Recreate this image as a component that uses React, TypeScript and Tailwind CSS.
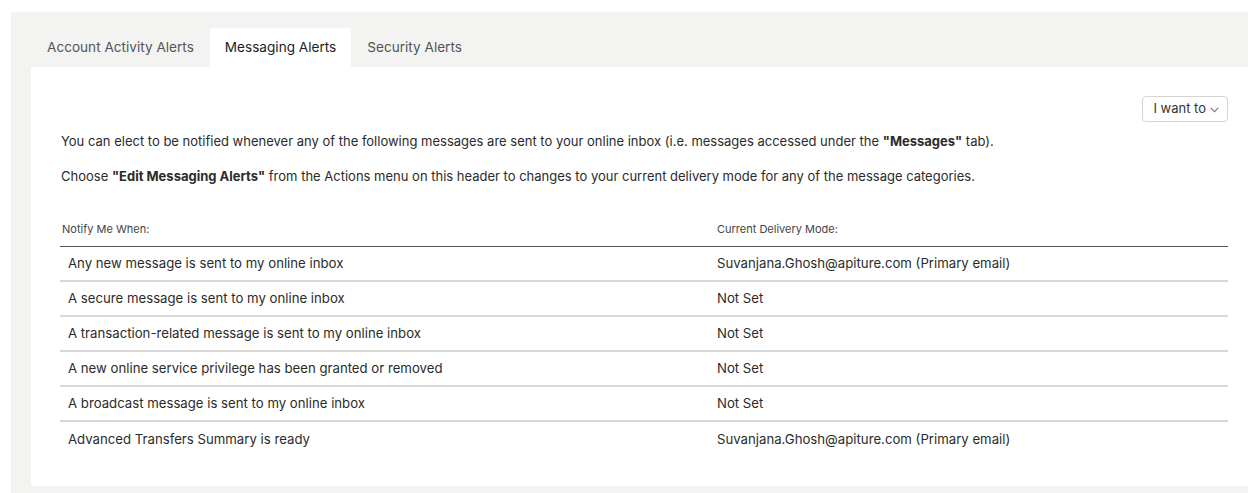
import React from "react";

const rows: [string, string][] = [
  ["Any new message is sent to my online inbox", "Suvanjana.Ghosh@apiture.com (Primary email)"],
  ["A secure message is sent to my online inbox", "Not Set"],
  ["A transaction-related message is sent to my online inbox", "Not Set"],
  ["A new online service privilege has been granted or removed", "Not Set"],
  ["A broadcast message is sent to my online inbox", "Not Set"],
  ["Advanced Transfers Summary is ready", "Suvanjana.Ghosh@apiture.com (Primary email)"],
];

const tabs = ["Account Activity Alerts", "Messaging Alerts", "Security Alerts"];

export default function App() {
  return (
    <div
      className="h-[493px] w-[1248px] overflow-hidden bg-white pt-3 pl-[11px] text-[#2b2b2b]"
      style={{ fontFamily: "Inter, 'Noto Sans', sans-serif" }}
    >
      <div className="flex h-full flex-col bg-[#f3f3f2] pt-4 pl-5 pb-[7px]">
        {/* tab strip */}
        <div className="flex h-[39px] items-stretch">
          {tabs.map((t, i) => (
            <div
              key={t}
              className={
                i === 1
                  ? "flex items-center rounded-t-[3px] bg-white px-[15px] text-[13.6px] text-[#222]"
                  : "flex items-center px-[16px] text-[13.6px] text-[#555]"
              }
            >
              {t}
            </div>
          ))}
        </div>

        {/* panel body */}
        <div className="flex-1 rounded-bl-[4px] bg-white pt-[29px] pl-[30px] pr-[20px]">
          <div className="flex justify-end">
            <button className="flex h-[26px] items-center gap-[2px] rounded-[4px] border border-[#d4d4d4] bg-white pl-[10px] pr-[6px] text-[13px] text-[#333]">
              I want to
              <svg width="13" height="13" viewBox="0 0 12 12" fill="none" stroke="#777" strokeWidth="1">
                <path d="M2.5 4.5 6 8l3.5-3.5" />
              </svg>
            </button>
          </div>

          <p className="mt-[9px] text-[13px] leading-5">
            You can elect to be notified whenever any of the following messages are sent to your online inbox (i.e.
            messages accessed under the <b className="font-bold">"Messages"</b> tab).
          </p>
          <p className="mt-[15px] text-[13px] leading-5">
            Choose <b className="font-bold">"Edit Messaging Alerts"</b> from the Actions menu on this header to changes
            to your current delivery mode for any of the message categories.
          </p>

          {/* alert categories */}
          <div className="mt-[36px] ml-[-1px]">
            <div className="grid grid-cols-[657px_1fr] border-b border-[#555] pb-[9px] text-[11px] leading-[15px] text-[#444]">
              <div className="pl-[2px]">Notify Me When:</div>
              <div>Current Delivery Mode:</div>
            </div>
            {rows.map(([a, b], i) => (
              <div
                key={i}
                className={
                  i < rows.length - 1
                    ? "grid h-[35px] grid-cols-[657px_1fr] items-center border-b-2 border-[#d8d8d8] text-[13.2px]"
                    : "grid h-[35px] grid-cols-[657px_1fr] items-center text-[13.2px]"
                }
              >
                <div className="pl-2">{a}</div>
                <div>{b}</div>
              </div>
            ))}
          </div>
        </div>
      </div>
    </div>
  );
}
